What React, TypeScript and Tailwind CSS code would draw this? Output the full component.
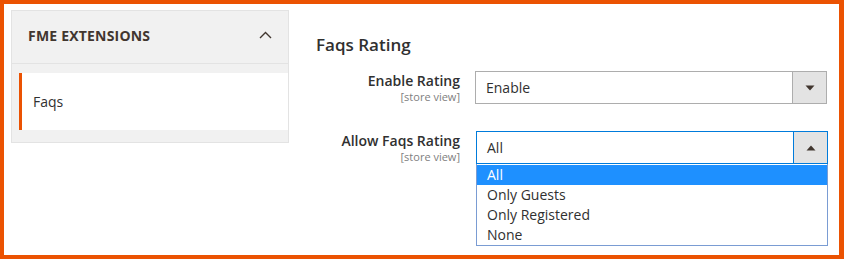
import React from 'react';

const font = { fontFamily: '"Open Sans", "Liberation Sans", sans-serif' };

const Arrow = ({ up }: { up?: boolean }) => (
  <svg width="10" height="6" viewBox="0 0 10 6" className={up ? 'rotate-180' : ''}>
    <path d="M0.5 0.5 L9.5 0.5 L5 5.5 Z" fill="#41362f" />
  </svg>
);

const App = () => {
  const options = ['All', 'Only Guests', 'Only Registered', 'None'];

  return (
    <div
      className="w-[844px] h-[259px] bg-white border-[#eb5202] border-t-4 border-l-4 border-b-4 border-r-[5px] flex pl-[7px] pt-[6px] text-[#303030] overflow-hidden"
      style={font}
    >
      {/* sidebar */}
      <div className="w-[278px] shrink-0 self-start bg-[#f1f1f1] border border-[#e3e3e3]">
        <div className="h-[53px] flex items-center justify-between pl-[16px] pr-[16px] border-b border-[#e3e3e3]">
          <span className="text-[14px] font-bold tracking-[0.2px] text-[#41362f] mb-[3px]">FME EXTENSIONS</span>
          <svg width="13" height="8" viewBox="0 0 13 8" className="mb-[4px]">
            <path d="M1 7 L6.5 1.5 L12 7" fill="none" stroke="#41362f" strokeWidth="1.4" />
          </svg>
        </div>
        <div className="pt-[9px] pb-[12px]">
          <div className="ml-[7px] h-[57px] bg-white border-l-[3px] border-[#eb5202] flex items-center pl-[11px]">
            <span className="text-[14px] text-[#303030]">Faqs</span>
          </div>
        </div>
      </div>

      {/* content */}
      <div className="ml-[27px] flex-1 pr-[12px]">
        <div className="mt-[23px] h-[24px] text-[17px] font-semibold leading-[24px] text-[#303030]">Faqs Rating</div>

        <div className="mt-[14px] flex">
          <div className="w-[144px] text-right">
            <div className="text-[14px] font-semibold leading-5">Enable Rating</div>
            <div className="text-[11px] leading-[11px] text-[#808080]">[store view]</div>
          </div>
          <div className="ml-[15px] w-[352px] h-[33px] border border-[#adadad] flex">
            <div className="flex-1 flex items-center pl-[10px] text-[14px]">Enable</div>
            <div className="w-[34px] bg-[#e3e3e3] border-l border-[#adadad] flex items-center justify-center">
              <Arrow />
            </div>
          </div>
        </div>

        <div className="mt-[27px] flex">
          <div className="w-[144px] text-right">
            <div className="text-[14px] font-semibold leading-5">Allow Faqs Rating</div>
            <div className="text-[11px] leading-[11px] text-[#808080]">[store view]</div>
          </div>
          <div className="ml-[16px] w-[352px] relative">
            <div className="h-[33px] border border-[#007bdb] flex">
              <div className="flex-1 flex items-center pl-[10px] text-[14px]">All</div>
              <div className="w-[34px] bg-[#e3e3e3] border-l border-[#007bdb] flex items-center justify-center">
                <Arrow up />
              </div>
            </div>
            <div className="absolute left-0 right-0 top-[33px] bg-white border border-[#7a9cd3] border-t-0 pt-[1px]">
              {options.map((o, i) => (
                <div
                  key={o}
                  className={
                    i === 0
                      ? 'h-[20px] leading-[20px] pl-[10px] text-[14px] bg-[#1e90ff] text-white'
                      : 'h-[20px] leading-[20px] pl-[10px] text-[14px] text-[#303030]'
                  }
                >
                  {o}
                </div>
              ))}
            </div>
          </div>
        </div>
      </div>
    </div>
  );
};

export default App;
